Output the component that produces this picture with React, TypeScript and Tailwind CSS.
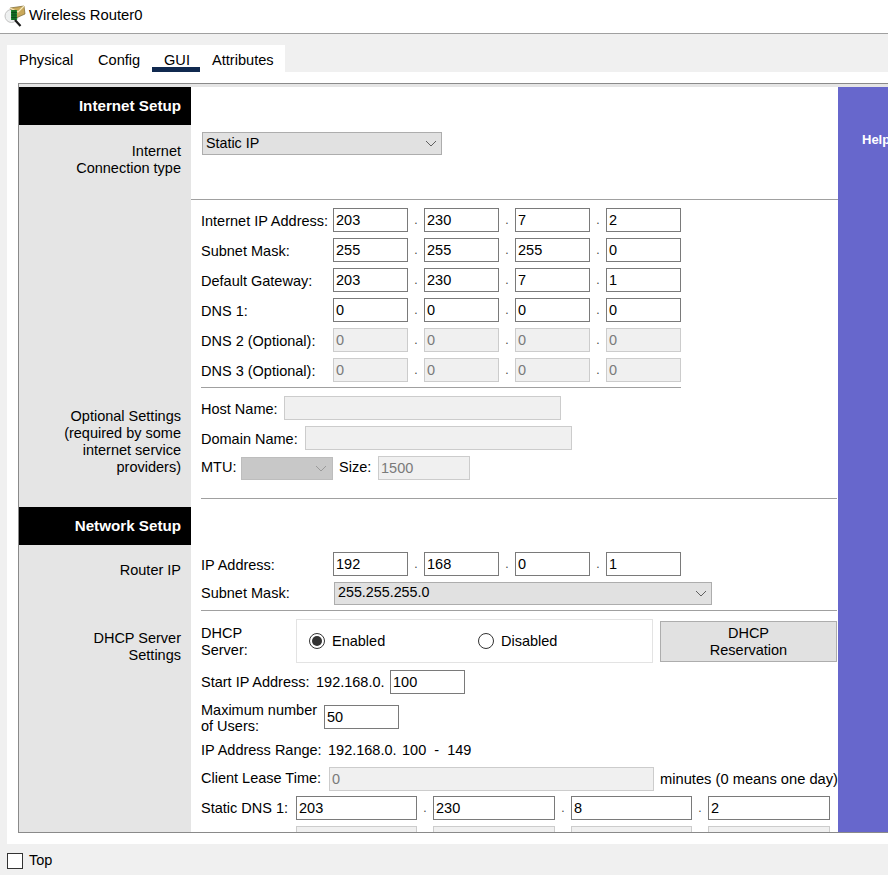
const Field = ({ value, disabled, className = "" }: { value?: string; disabled?: boolean; className?: string }) => (
  <div
    className={
      "h-[24px] shrink-0 border pl-[2px] text-[14.5px] leading-[22px] " +
      (disabled ? "border-[#cccccc] bg-[#f0f0f0] text-[#7a7a7a] " : "border-[#7a7a7a] bg-white text-black ") +
      className
    }
  >
    {value}
  </div>
);

const Dot = ({ w }: { w: string }) => (
  <div className={w + " shrink-0 text-center text-[12px] leading-[30px] text-[#444]"}>.</div>
);

const Ip = ({ label, v, disabled, className = "" }: { label: string; v: string[]; disabled?: boolean; className?: string }) => (
  <div className={"flex h-[24px] items-center " + className}>
    <div className="w-[142px] shrink-0 whitespace-nowrap pl-[10px] pt-[3px]">{label}</div>
    <Field value={v[0]} disabled={disabled} className="w-[75px]" />
    <Dot w="w-[16px]" />
    <Field value={v[1]} disabled={disabled} className="w-[75px]" />
    <Dot w="w-[16px]" />
    <Field value={v[2]} disabled={disabled} className="w-[75px]" />
    <Dot w="w-[16px]" />
    <Field value={v[3]} disabled={disabled} className="w-[75px]" />
  </div>
);

const Chevron = ({ color = "#5f5f5f" }: { color?: string }) => (
  <svg width="12" height="7" viewBox="0 0 12 7" fill="none" className="shrink-0">
    <path d="M1 1l5 5 5-5" stroke={color} strokeWidth="1" />
  </svg>
);

const Select = ({ value, className = "" }: { value: string; className?: string }) => (
  <div className={"flex h-[23px] items-center justify-between border border-[#adadad] bg-[#e1e1e1] pl-[3px] pr-[4px] text-[14.3px] " + className}>
    <span>{value}</span>
    <Chevron />
  </div>
);

const Header = ({ title, className = "" }: { title: string; className?: string }) => (
  <div className={"flex h-[38px] " + className}>
    <div className="flex w-[172px] shrink-0 items-center justify-end bg-black pr-[10px] text-[15.2px] font-bold text-white">
      {title}
    </div>
    <div className="flex-1 bg-white" />
  </div>
);

const Row = ({ left, children, className = "" }: { left: React.ReactNode; children: React.ReactNode; className?: string }) => (
  <div className={"flex " + className}>
    <div className="w-[172px] shrink-0 bg-[#e5e5e5] pr-[10px] text-right text-[14.5px] leading-[17px]">{left}</div>
    <div className="min-w-0 flex-1 bg-white">{children}</div>
  </div>
);

const Radio = ({ on }: { on?: boolean }) => (
  <div className="flex h-[16px] w-[16px] shrink-0 items-center justify-center rounded-full border border-[#333333] bg-white">
    {on && <div className="h-[10px] w-[10px] rounded-full bg-[#333333]" />}
  </div>
);

const Icon = () => (
  <svg width="22" height="22" viewBox="0 0 22 22" className="shrink-0">
    <circle cx="7.5" cy="11" r="6.5" fill="#eef0f0" stroke="#c4c4c4" strokeWidth="1" />
    <path d="M6 3l14-2 1 8-9 4z" fill="#c9a85a" stroke="#7a6630" strokeWidth="0.7" />
    <path d="M6 3l8 4 6-6" fill="none" stroke="#f5e8bd" strokeWidth="1.2" />
    <rect x="7" y="5" width="6" height="10" fill="#1f8a2e" />
    <path d="M9 5v10M11 5v10M7 7.5h6M7 10h6M7 12.5h6" stroke="#0a3d14" strokeWidth="0.7" />
    <path d="M11 15l5.5 6" stroke="#1a1a1a" strokeWidth="2.2" />
  </svg>
);

export default function App() {
  return (
    <div className="flex h-[875px] w-[888px] flex-col overflow-hidden bg-[#f0f0f0] text-[14.5px] text-black [font-family:'Liberation_Sans',Arial,sans-serif]">
      <div className="flex h-[34px] shrink-0 items-center border-b border-[#a0a0a0] bg-white pb-[2px] pl-[4px]">
        <Icon />
        <span className="ml-[3px] text-[14.8px]">Wireless Router0</span>
      </div>

      <div className="ml-[7px] mt-[11px] flex h-[27px] w-[278px] shrink-0 bg-white text-[14.6px]">
        <div className="w-[79px] pl-[12px] pt-[5px]">Physical</div>
        <div className="w-[66px] pl-[12px] pt-[5px]">Config</div>
        <div className="h-[27px] w-[48px] border-b-[5px] border-[#10294f] pl-[12px] pt-[5px]">GUI</div>
        <div className="pl-[12px] pt-[5px]">Attributes</div>
      </div>

      <div className="ml-[7px] flex h-[772px] shrink-0 flex-col bg-white pl-[11px] pt-[11px]">
        <div className="flex h-[750px] w-[900px] overflow-hidden border-y-[1px] border-l-[1px] border-[#8a8a8a] bg-[#e5e5e5] pt-[3px]">
          <div className="w-[819px] shrink-0">
            <Header title="Internet Setup" />
            <Row left={<div className="pt-[18px]">Internet<br />Connection type</div>} className="h-[75px]">
              <div className="h-full border-b border-[#a0a0a0] pl-[11px] pt-[7px]">
                <Select value="Static IP" className="w-[240px]" />
              </div>
            </Row>
            <Row
              left={
                <div className="pl-[26px] pt-[208px]">
                  Optional Settings (required by some internet service providers)
                </div>
              }
              className="h-[307px]"
            >
              <div className="pt-[8px]">
                <div className="flex flex-col gap-[6px]">
                  <Ip label="Internet IP Address:" v={["203", "230", "7", "2"]} />
                  <Ip label="Subnet Mask:" v={["255", "255", "255", "0"]} />
                  <Ip label="Default Gateway:" v={["203", "230", "7", "1"]} />
                  <Ip label="DNS 1:" v={["0", "0", "0", "0"]} />
                  <Ip label="DNS 2 (Optional):" v={["0", "0", "0", "0"]} disabled />
                  <Ip label="DNS 3 (Optional):" v={["0", "0", "0", "0"]} disabled />
                </div>
                <div className="ml-[10px] mt-[5px] w-[480px] border-t border-[#a0a0a0]" />
                <div className="mt-[8px] flex h-[24px] items-center pl-[10px]">
                  <span className="w-[83px] pt-[3px]">Host Name:</span>
                  <Field disabled className="w-[277px]" />
                </div>
                <div className="mt-[6px] flex h-[24px] items-center pl-[10px]">
                  <span className="w-[104px] pt-[3px]">Domain Name:</span>
                  <Field disabled className="w-[267px]" />
                </div>
                <div className="mt-[6px] flex h-[24px] items-center pl-[10px]">
                  <span className="w-[40px]">MTU:</span>
                  <div className="flex h-[23px] w-[92px] items-center justify-end border border-[#bdbdbd] bg-[#c8c8c8] pr-[5px]">
                    <Chevron color="#9a9a9a" />
                  </div>
                  <span className="ml-[6px] w-[39px]">Size:</span>
                  <Field value="1500" disabled className="w-[92px]" />
                </div>
                <div className="ml-[10px] mr-[1px] mt-[18px] border-t border-[#a0a0a0]" />
              </div>
            </Row>
            <Header title="Network Setup" />
            <Row left={<div className="pt-[17px]">Router IP</div>} className="h-[66px]">
              <div className="h-full pt-[7px]">
                <Ip label="IP Address:" v={["192", "168", "0", "1"]} />
                <div className="mt-[5px] flex h-[24px] items-center">
                  <span className="w-[143px] shrink-0 pl-[10px] pt-[2px]">Subnet Mask:</span>
                  <Select value="255.255.255.0" className="w-[378px]" />
                </div>
                <div className="ml-[10px] mr-[1px] mt-[5px] border-t border-[#a0a0a0]" />
              </div>
            </Row>
            <Row left={<div className="pt-[19px]">DHCP Server<br />Settings</div>} className="h-[185px]">
              <div className="pt-[8px]">
                <div className="flex items-start pl-[10px]">
                  <div className="w-[95px] pt-[6px] leading-[17px]">DHCP<br />Server:</div>
                  <div className="flex h-[44px] w-[357px] items-center border border-[#e3e3e3] pl-[12px]">
                    <Radio on />
                    <span className="ml-[7px] w-[146px] pt-[2px]">Enabled</span>
                    <Radio />
                    <span className="ml-[7px] pt-[2px]">Disabled</span>
                  </div>
                  <div className="ml-[7px] mt-[2px] flex h-[41px] w-[177px] items-center justify-center border border-[#adadad] bg-[#e1e1e1] text-center leading-[17px]">
                    DHCP<br />Reservation
                  </div>
                </div>
                <div className="mt-[7px] flex h-[24px] items-center pl-[10px]">
                  <span className="w-[115px] whitespace-nowrap pt-[1px]">Start IP Address:</span>
                  <span className="w-[74px] whitespace-nowrap pt-[1px]">192.168.0.</span>
                  <Field value="100" className="w-[75px]" />
                </div>
                <div className="mt-[8px] flex items-center pl-[10px]">
                  <div className="w-[123px] whitespace-nowrap leading-[16px]">Maximum number<br />of Users:</div>
                  <Field value="50" className="mt-[-3px] w-[75px]" />
                </div>
                <div className="mt-[8px] flex h-[18px] items-center pl-[10px]">
                  <span className="w-[127px] whitespace-nowrap">IP Address Range:</span>
                  <span className="w-[74px] whitespace-nowrap">192.168.0.</span>
                  <span className="whitespace-nowrap">100&nbsp; -&nbsp; 149</span>
                </div>
                <div className="mt-[7px] flex h-[24px] items-center pl-[10px]">
                  <span className="w-[128px] whitespace-nowrap">Client Lease Time:</span>
                  <Field value="0" disabled className="w-[325px]" />
                  <span className="ml-[6px] whitespace-nowrap text-[14.7px]">minutes (0 means one day)</span>
                </div>
              </div>
            </Row>
            <Row left={null} className="h-[37px] overflow-hidden">
              <div>
                <div className="flex h-[24px] items-center pl-[10px]">
                  <span className="w-[95px] shrink-0 whitespace-nowrap pt-[2px]">Static DNS 1:</span>
                  <Field value="203" className="w-[121px]" />
                  <Dot w="w-[16px]" />
                  <Field value="230" className="w-[122px]" />
                  <Dot w="w-[16px]" />
                  <Field value="8" className="w-[121px]" />
                  <Dot w="w-[16px]" />
                  <Field value="2" className="w-[122px]" />
                </div>
                <div className="mt-[6px] flex h-[24px] items-center pl-[105px]">
                  <Field disabled className="w-[121px]" />
                  <div className="w-[16px] shrink-0" />
                  <Field disabled className="w-[122px]" />
                  <div className="w-[16px] shrink-0" />
                  <Field disabled className="w-[121px]" />
                  <div className="w-[16px] shrink-0" />
                  <Field disabled className="w-[122px]" />
                </div>
              </div>
            </Row>
          </div>
          <div className="flex-1 bg-[#6767cc] pl-[24px] pt-[43px] text-[13px] font-bold text-white">Help</div>
        </div>
      </div>

      <div className="flex flex-1 items-center pl-[7px] pt-[2px]">
        <div className="h-[16px] w-[16px] border border-[#333333] bg-white" />
        <span className="ml-[6px]">Top</span>
      </div>
    </div>
  );
}
